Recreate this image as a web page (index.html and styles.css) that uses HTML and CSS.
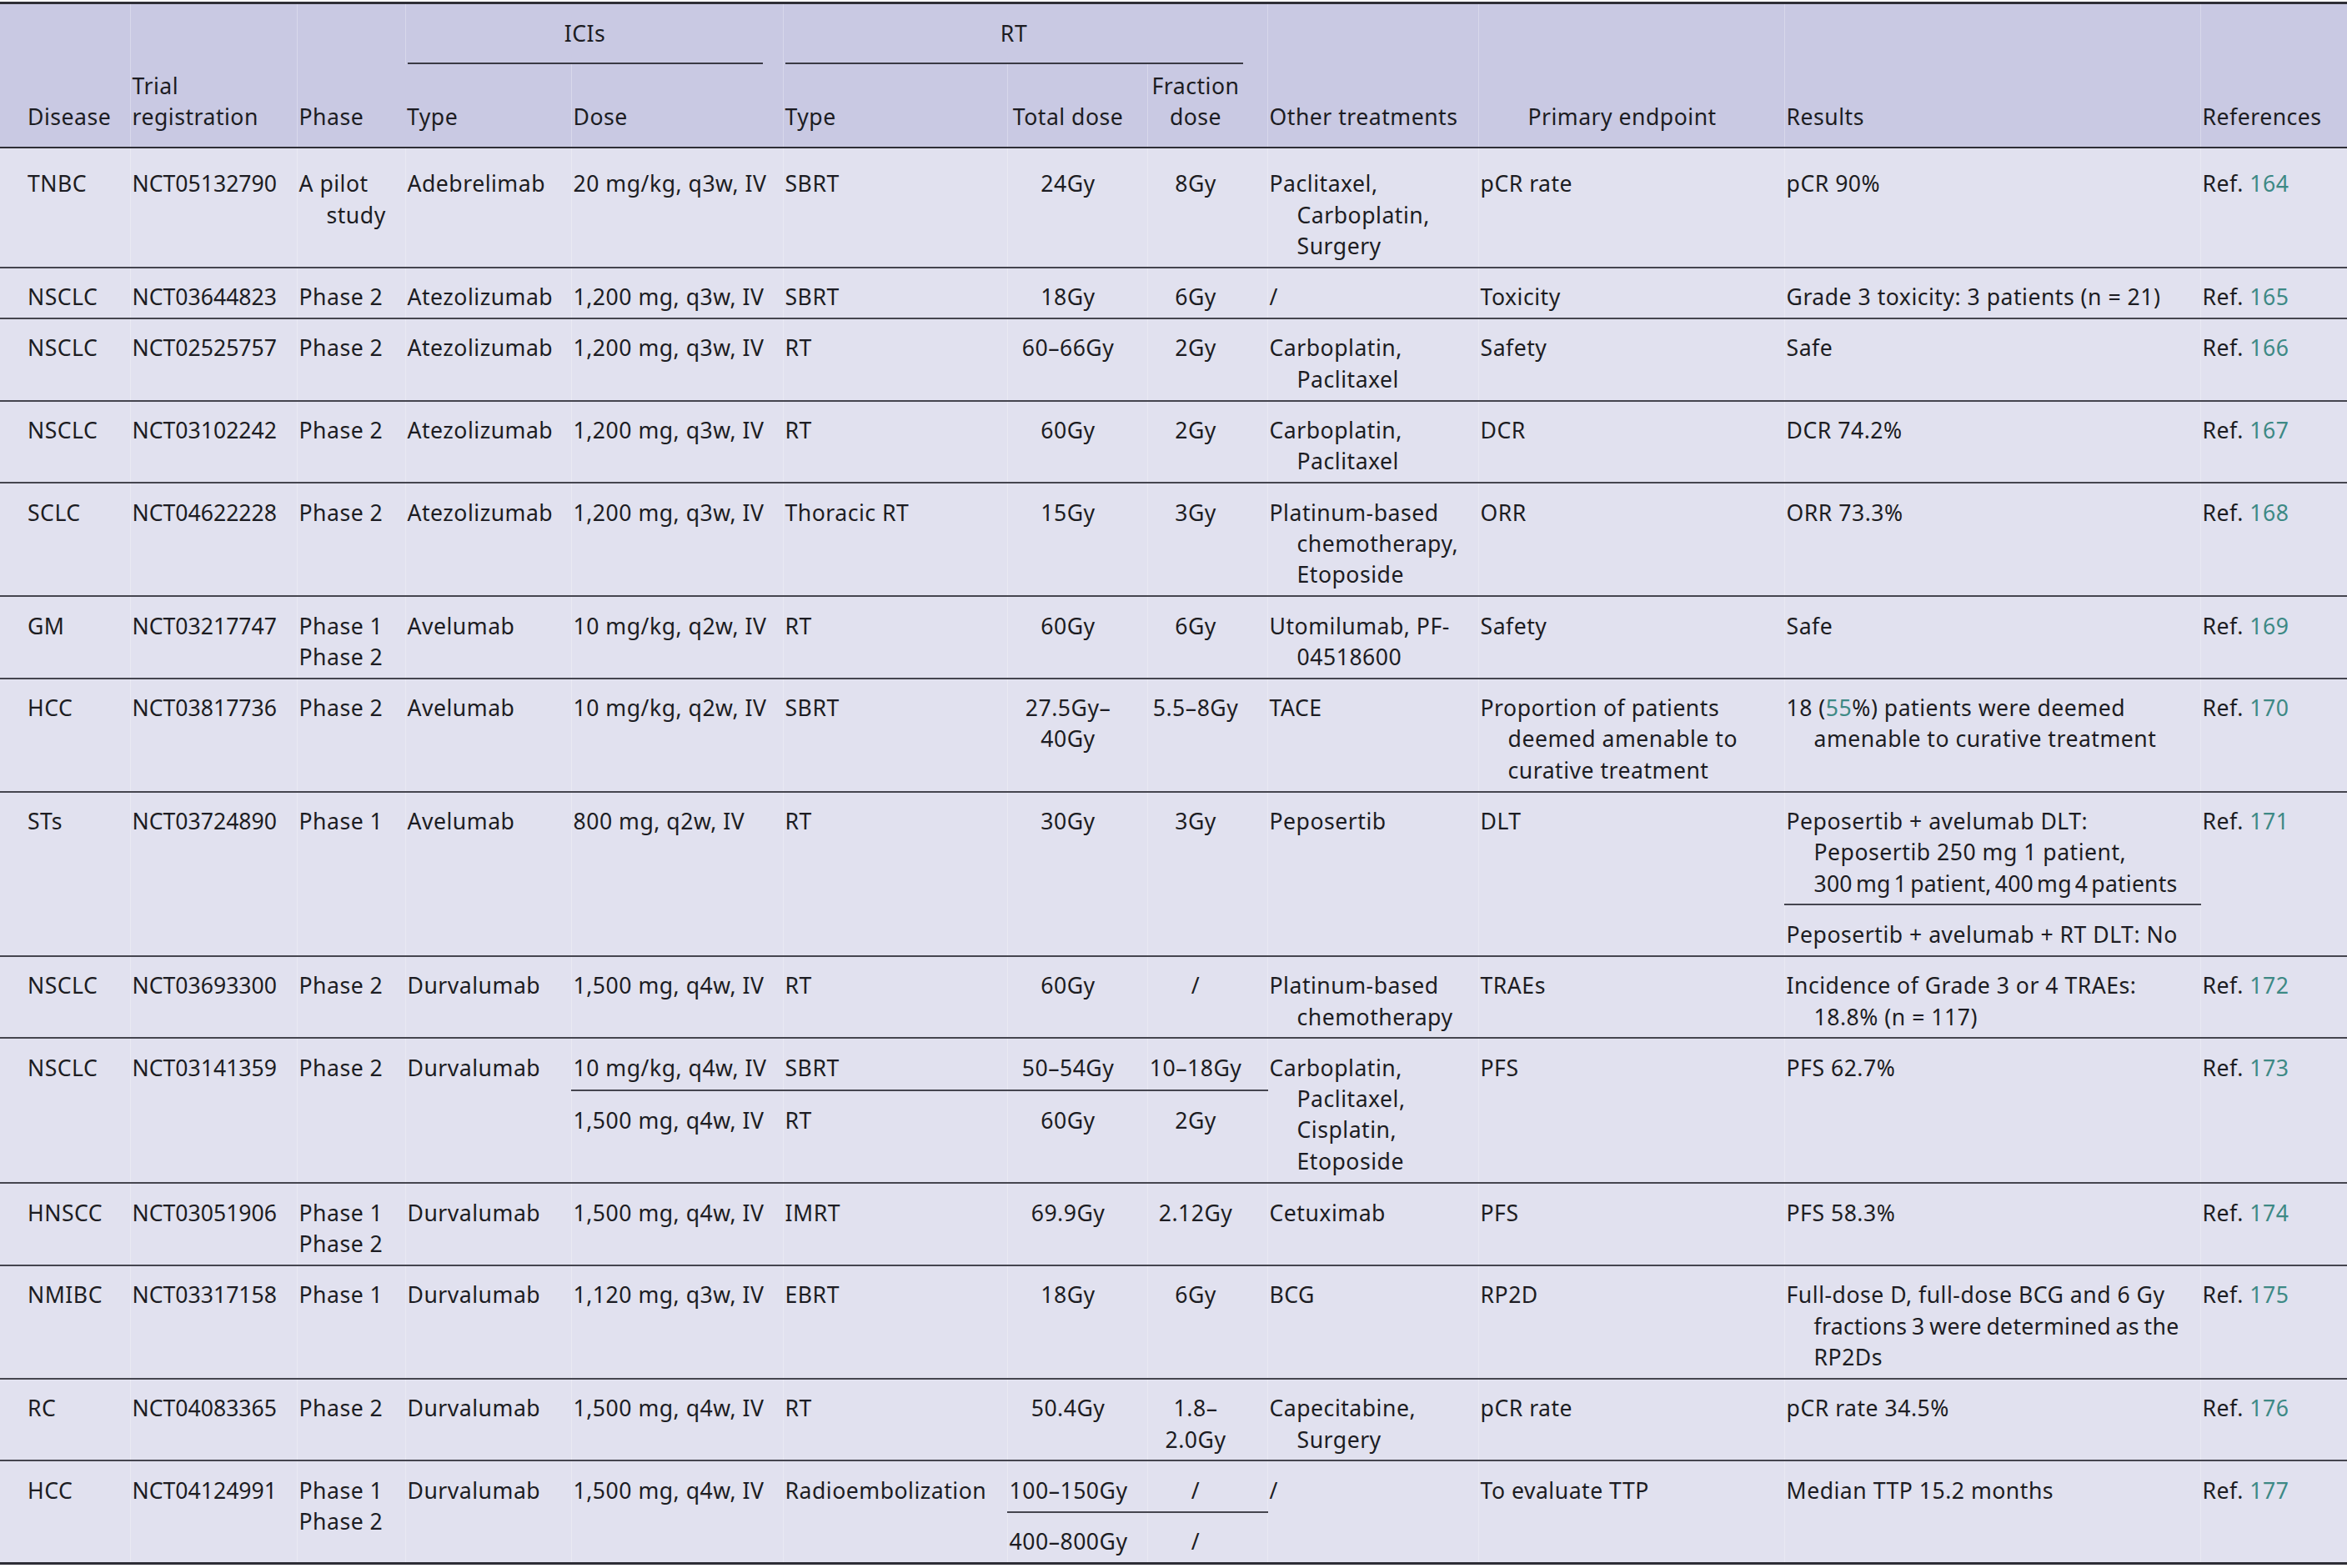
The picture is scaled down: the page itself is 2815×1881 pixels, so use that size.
FILE: index.html
```html
<!DOCTYPE html>
<html lang="en">
<head>
<meta charset="utf-8">
<title>ICIs combined with RT trials</title>
<link rel="stylesheet" href="styles.css">
</head>
<body>
<table class="t">
<colgroup>
<col class="w1"><col class="w2"><col class="w3"><col class="w4"><col class="w5"><col class="w6"><col class="w7"><col class="w8"><col class="w9"><col class="w10"><col class="w11"><col class="w12">
</colgroup>
<thead>
<tr class="h1">
<th rowspan="2" class="first">Disease</th>
<th rowspan="2">Trial<br>registration</th>
<th rowspan="2">Phase</th>
<th colspan="2" class="span"><div class="lbl">ICIs</div></th>
<th colspan="3" class="span rtspan"><div class="lbl">RT</div></th>
<th rowspan="2">Other treatments</th>
<th rowspan="2" class="cen">Primary endpoint</th>
<th rowspan="2">Results</th>
<th rowspan="2">References</th>
</tr>
<tr class="h2">
<th>Type</th>
<th>Dose</th>
<th>Type</th>
<th class="cen tot">Total dose</th>
<th class="cen frac">Fraction<br>dose</th>
</tr>
</thead>
<tbody>
<tr class="r1">
<td class="first">TNBC</td><td class="id">NCT05132790</td><td>A pilot<br>study</td><td>Adebrelimab</td><td>20 mg/kg, q3w, IV</td><td>SBRT</td><td class="tot">24Gy</td><td class="frac">8Gy</td><td>Paclitaxel,<br>Carboplatin,<br>Surgery</td><td>pCR rate</td><td>pCR 90%</td><td>Ref. <span class="ref">164</span></td>
</tr>
<tr>
<td class="first">NSCLC</td><td class="id">NCT03644823</td><td>Phase 2</td><td>Atezolizumab</td><td>1,200 mg, q3w, IV</td><td>SBRT</td><td class="tot">18Gy</td><td class="frac">6Gy</td><td>/</td><td>Toxicity</td><td>Grade 3 toxicity: 3 patients (n = 21)</td><td>Ref. <span class="ref">165</span></td>
</tr>
<tr>
<td class="first">NSCLC</td><td class="id">NCT02525757</td><td>Phase 2</td><td>Atezolizumab</td><td>1,200 mg, q3w, IV</td><td>RT</td><td class="tot">60–66Gy</td><td class="frac">2Gy</td><td>Carboplatin,<br>Paclitaxel</td><td>Safety</td><td>Safe</td><td>Ref. <span class="ref">166</span></td>
</tr>
<tr>
<td class="first">NSCLC</td><td class="id">NCT03102242</td><td>Phase 2</td><td>Atezolizumab</td><td>1,200 mg, q3w, IV</td><td>RT</td><td class="tot">60Gy</td><td class="frac">2Gy</td><td>Carboplatin,<br>Paclitaxel</td><td>DCR</td><td>DCR 74.2%</td><td>Ref. <span class="ref">167</span></td>
</tr>
<tr>
<td class="first">SCLC</td><td class="id">NCT04622228</td><td>Phase 2</td><td>Atezolizumab</td><td>1,200 mg, q3w, IV</td><td>Thoracic RT</td><td class="tot">15Gy</td><td class="frac">3Gy</td><td>Platinum-based<br>chemotherapy,<br>Etoposide</td><td>ORR</td><td>ORR 73.3%</td><td>Ref. <span class="ref">168</span></td>
</tr>
<tr>
<td class="first">GM</td><td class="id">NCT03217747</td><td>Phase 1<div class="ln">Phase 2</div></td><td>Avelumab</td><td>10 mg/kg, q2w, IV</td><td>RT</td><td class="tot">60Gy</td><td class="frac">6Gy</td><td>Utomilumab, PF-<br>04518600</td><td>Safety</td><td>Safe</td><td>Ref. <span class="ref">169</span></td>
</tr>
<tr>
<td class="first">HCC</td><td class="id">NCT03817736</td><td>Phase 2</td><td>Avelumab</td><td>10 mg/kg, q2w, IV</td><td>SBRT</td><td class="tot">27.5Gy–<br>40Gy</td><td class="frac">5.5–8Gy</td><td>TACE</td><td>Proportion of patients<br>deemed amenable to<br>curative treatment</td><td>18 (<span class="ref">55</span>%) patients were deemed<br>amenable to curative treatment</td><td>Ref. <span class="ref">170</span></td>
</tr>
<tr>
<td rowspan="2" class="first">STs</td><td rowspan="2" class="id">NCT03724890</td><td rowspan="2">Phase 1</td><td rowspan="2">Avelumab</td><td rowspan="2">800 mg, q2w, IV</td><td rowspan="2">RT</td><td rowspan="2" class="tot">30Gy</td><td rowspan="2" class="frac">3Gy</td><td rowspan="2">Peposertib</td><td rowspan="2">DLT</td><td>Peposertib + avelumab DLT:<br>Peposertib 250 mg 1 patient,<br><span class="tight">300 mg 1 patient, 400 mg 4 patients</span></td><td rowspan="2">Ref. <span class="ref">171</span></td>
</tr>
<tr>
<td>Peposertib + avelumab + RT DLT: No</td>
</tr>
<tr>
<td class="first">NSCLC</td><td class="id">NCT03693300</td><td>Phase 2</td><td>Durvalumab</td><td>1,500 mg, q4w, IV</td><td>RT</td><td class="tot">60Gy</td><td class="frac">/</td><td>Platinum-based<br>chemotherapy</td><td>TRAEs</td><td>Incidence of Grade 3 or 4 TRAEs:<br>18.8% (n = 117)</td><td>Ref. <span class="ref">172</span></td>
</tr>
<tr class="sa">
<td rowspan="2" class="first">NSCLC</td><td rowspan="2" class="id">NCT03141359</td><td rowspan="2">Phase 2</td><td rowspan="2">Durvalumab</td><td>10 mg/kg, q4w, IV</td><td>SBRT</td><td class="tot">50–54Gy</td><td class="frac">10–18Gy</td><td rowspan="2">Carboplatin,<br>Paclitaxel,<br>Cisplatin,<br>Etoposide</td><td rowspan="2">PFS</td><td rowspan="2">PFS 62.7%</td><td rowspan="2">Ref. <span class="ref">173</span></td>
</tr>
<tr class="sb">
<td>1,500 mg, q4w, IV</td><td>RT</td><td class="tot">60Gy</td><td class="frac">2Gy</td>
</tr>
<tr>
<td class="first">HNSCC</td><td class="id">NCT03051906</td><td>Phase 1<div class="ln">Phase 2</div></td><td>Durvalumab</td><td>1,500 mg, q4w, IV</td><td>IMRT</td><td class="tot">69.9Gy</td><td class="frac">2.12Gy</td><td>Cetuximab</td><td>PFS</td><td>PFS 58.3%</td><td>Ref. <span class="ref">174</span></td>
</tr>
<tr>
<td class="first">NMIBC</td><td class="id">NCT03317158</td><td>Phase 1</td><td>Durvalumab</td><td>1,120 mg, q3w, IV</td><td>EBRT</td><td class="tot">18Gy</td><td class="frac">6Gy</td><td>BCG</td><td>RP2D</td><td>Full-dose D, full-dose BCG and 6 Gy<br><span class="snug">fractions 3 were determined as the</span><br>RP2Ds</td><td>Ref. <span class="ref">175</span></td>
</tr>
<tr>
<td class="first">RC</td><td class="id">NCT04083365</td><td>Phase 2</td><td>Durvalumab</td><td>1,500 mg, q4w, IV</td><td>RT</td><td class="tot">50.4Gy</td><td class="frac">1.8–<br>2.0Gy</td><td>Capecitabine,<br>Surgery</td><td>pCR rate</td><td>pCR rate 34.5%</td><td>Ref. <span class="ref">176</span></td>
</tr>
<tr>
<td rowspan="2" class="first">HCC</td><td rowspan="2" class="id">NCT04124991</td><td rowspan="2">Phase 1<div class="ln">Phase 2</div></td><td rowspan="2">Durvalumab</td><td rowspan="2">1,500 mg, q4w, IV</td><td rowspan="2">Radioembolization</td><td class="tot">100–150Gy</td><td class="frac">/</td><td rowspan="2">/</td><td rowspan="2">To evaluate TTP</td><td rowspan="2">Median TTP 15.2 months</td><td rowspan="2">Ref. <span class="ref">177</span></td>
</tr>
<tr>
<td class="tot">400–800Gy</td><td class="frac">/</td>
</tr>
</tbody>
</table>
</body>
</html>
```

FILE: styles.css
```css
html, body {
  margin: 0;
  padding: 0;
  background: #ffffff;
}

.t {
  width: 2815px;
  margin-top: 2px;
  table-layout: fixed;
  border-collapse: collapse;
  font-family: "Noto Sans", "Open Sans", sans-serif;
  font-size: 26.6px;
  line-height: 37.3px;
  letter-spacing: 0.5px;
  color: #1c1c22;
  border-top: 3px solid #2e2e36;
  border-bottom: 3px solid #2e2e36;
}

.w1 { width: 156px; }
.w2 { width: 200px; }
.w3 { width: 130px; }
.w4 { width: 199px; }
.w5 { width: 254px; }
.w6 { width: 269px; }
.w7 { width: 168px; }
.w8 { width: 144px; }
.w9 { width: 253px; }
.w10 { width: 367px; }
.w11 { width: 499px; }
.w12 { width: 176px; }

th, td {
  white-space: nowrap;
  border-left: 1px solid rgba(255, 255, 255, 0.28);
}

th:first-child, td.first {
  border-left: none;
}

th {
  background: #c9c9e3;
  font-weight: 400;
  text-align: left;
  vertical-align: bottom;
  padding: 0 24px 17px 2px;
}

thead tr.h2 th,
thead th[rowspan] {
  border-bottom: 2px solid #2e2e36;
}

.h1 { height: 72px; }
.h2 { height: 100px; }

th.first { padding-left: 33px; }

th.cen { text-align: center; }

th.span {
  vertical-align: top;
  padding: 17px 24px 0 2px;
}

th.rtspan { padding-right: 29px; }

.lbl {
  text-align: center;
  padding-bottom: 16px;
  border-bottom: 2px solid #3a3a44;
}

td {
  background: #e1e1ef;
  vertical-align: top;
  padding: 16.5px 24px 5.5px 35px;
  text-indent: -33px;
  border-bottom: 2px solid #45454f;
}

td.first {
  padding-left: 66px;
}

td.id {
  letter-spacing: 0;
}

tr.r1 td {
  padding-top: 24px;
}

.tot, .frac {
  text-align: center;
}

td.tot, td.frac {
  text-indent: 0;
  padding-left: 2px;
}

.tot { padding-right: 24px; }
.frac { padding-right: 30px; }

.ln {
  text-indent: 0;
  margin-left: -33px;
}

.tight {
  letter-spacing: 0.2px;
  word-spacing: -3px;
}

.snug {
  letter-spacing: 0.3px;
  word-spacing: -1.5px;
}

.ref {
  color: #3d8985;
}

tr.sa { height: 63px; }
tr.sb { height: 111px; }

tbody tr:last-child td {
  border-bottom: 3px solid #2e2e36;
}
```
